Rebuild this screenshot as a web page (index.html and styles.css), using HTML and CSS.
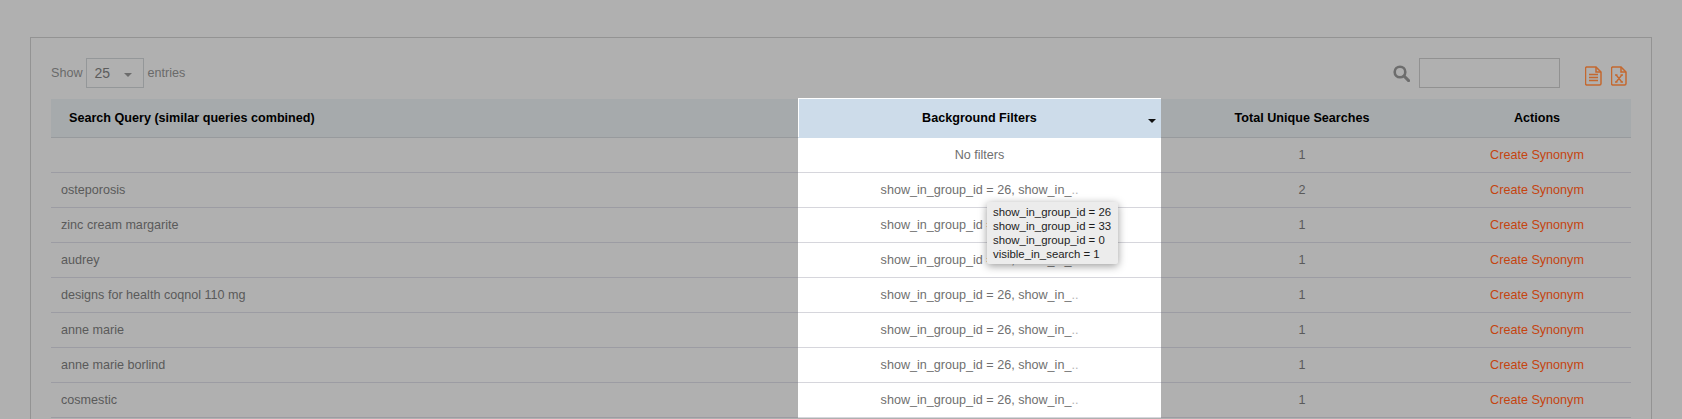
FILE: index.html
```html
<!DOCTYPE html>
<html lang="en">
<head>
<meta charset="utf-8">
<title>Search Queries</title>
<link rel="stylesheet" href="styles.css">
</head>
<body>
<div class="panel">
  <div class="toolbar">
    <div class="length">
      <span>Show</span>
      <div class="select"><span>25</span><i class="caret"></i></div>
      <span>entries</span>
    </div>
    <div class="tools">
      <svg class="search-icon" width="17" height="17" viewBox="0 0 17 17" aria-hidden="true">
        <circle cx="7" cy="7" r="5.3" fill="none" stroke="#6d6d6d" stroke-width="2.6"/>
        <path d="M11 11l4.6 4.6" stroke="#6d6d6d" stroke-width="3" stroke-linecap="round"/>
      </svg>
      <div class="search-box"></div>
      <div class="exports">
        <svg class="doc" width="17" height="20" viewBox="0 0 17 20" aria-hidden="true">
          <path d="M1.500 1h9.500l5 5v11.500a1.500 1.500 0 0 1-1.500 1.500h-13A1.500 1.500 0 0 1 .5 17.500V2.500A1.500 1.500 0 0 1 1.500 1z" fill="none" stroke="#c4682f" stroke-width="1.500"/>
          <path d="M11 1v5h5" fill="none" stroke="#c4682f" stroke-width="1.500"/>
          <path d="M4 8.500h9M4 11.500h9M4 14.500h9" stroke="#c4682f" stroke-width="1.500"/>
        </svg>
        <svg class="doc" width="16" height="20" viewBox="0 0 16 20" aria-hidden="true">
          <path d="M1.500 1h8.500l5 5v11.500a1.500 1.500 0 0 1-1.500 1.500h-12A1.500 1.500 0 0 1 .5 17.500V2.500A1.500 1.500 0 0 1 1.500 1z" fill="none" stroke="#c4682f" stroke-width="1.500"/>
          <path d="M10 1v5h5" fill="none" stroke="#c4682f" stroke-width="1.500"/>
          <path d="M4 9h2.500M9.500 9h2.500M4 16h2.500M9.500 16h2.500M5.200 9l5.600 7M10.800 9l-5.600 7" fill="none" stroke="#c4682f" stroke-width="1.300"/>
        </svg>
      </div>
    </div>
  </div>

  <div class="table-wrap">
    <table class="grid">
      <colgroup>
        <col class="c-query"><col class="c-filter"><col class="c-total"><col class="c-actions">
      </colgroup>
      <thead>
        <tr>
          <th class="query-head">Search Query (similar queries combined)</th>
          <th class="filter-head">Background Filters<i class="sort"></i></th>
          <th>Total Unique Searches</th>
          <th>Actions</th>
        </tr>
      </thead>
      <tbody>
        <tr><td class="q"></td><td class="f">No filters</td><td class="n">1</td><td class="a">Create Synonym</td></tr>
        <tr><td class="q">osteporosis</td><td class="f">show_in_group_id = 26, show_in_<span class="fade">..</span></td><td class="n">2</td><td class="a">Create Synonym</td></tr>
        <tr><td class="q">zinc cream margarite</td><td class="f">show_in_group_id = 26, show_in_<span class="fade">..</span></td><td class="n">1</td><td class="a">Create Synonym</td></tr>
        <tr><td class="q">audrey</td><td class="f">show_in_group_id = 26, show_in_<span class="fade">..</span></td><td class="n">1</td><td class="a">Create Synonym</td></tr>
        <tr><td class="q">designs for health coqnol 110 mg</td><td class="f">show_in_group_id = 26, show_in_<span class="fade">..</span></td><td class="n">1</td><td class="a">Create Synonym</td></tr>
        <tr><td class="q">anne marie</td><td class="f">show_in_group_id = 26, show_in_<span class="fade">..</span></td><td class="n">1</td><td class="a">Create Synonym</td></tr>
        <tr><td class="q">anne marie borlind</td><td class="f">show_in_group_id = 26, show_in_<span class="fade">..</span></td><td class="n">1</td><td class="a">Create Synonym</td></tr>
        <tr><td class="q">cosmestic</td><td class="f">show_in_group_id = 26, show_in_<span class="fade">..</span></td><td class="n">1</td><td class="a">Create Synonym</td></tr>
      </tbody>
    </table>
    <div class="tip">
      <div>show_in_group_id = 26</div>
      <div>show_in_group_id = 33</div>
      <div>show_in_group_id = 0</div>
      <div>visible_in_search = 1</div>
    </div>
  </div>
</div>
</body>
</html>
```
FILE: styles.css
```css
html, body {
  margin: 0;
  padding: 0;
  height: 419px;
  overflow: hidden;
  background: #b0b0b0;
  font-family: "Liberation Sans", Arial, sans-serif;
  font-size: 12.6px;
  color: #5e5e5e;
}

.panel {
  margin: 37px 30px 0;
  padding: 20px 20px 0;
  border: 1px solid #939393;
  height: 500px;
}

.toolbar {
  display: flex;
  justify-content: space-between;
  align-items: center;
  height: 30px;
  margin-bottom: 11px;
}

.length {
  display: flex;
  align-items: center;
  gap: 3px;
  color: #6a6a6a;
}

.select {
  box-sizing: border-box;
  width: 58px;
  height: 30px;
  margin-right: 1px;
  padding: 0 11px 0 8px;
  display: flex;
  align-items: center;
  justify-content: space-between;
  border: 1px solid #949799;
  font-size: 14px;
  color: #5c5c5c;
}

.caret {
  width: 0;
  height: 0;
  margin-top: 4px;
  border-left: 4px solid transparent;
  border-right: 4px solid transparent;
  border-top: 4px solid #6c6c6c;
}

.tools {
  display: flex;
  align-items: center;
  margin-right: -1px;
}

.search-icon {
  margin-right: 9px;
}

.search-box {
  box-sizing: border-box;
  width: 141px;
  height: 30px;
  border: 1px solid #919191;
}

.exports {
  display: flex;
  gap: 9px;
  margin-left: 25px;
  margin-right: 5px;
  padding-top: 5px;
}

.table-wrap {
  position: relative;
}

.grid {
  width: 1580px;
  table-layout: fixed;
  border-collapse: separate;
  border-spacing: 0;
}

.c-query { width: 747px; }
.c-filter { width: 363px; }
.c-total { width: 282px; }
.c-actions { width: 188px; }

.grid th {
  box-sizing: border-box;
  height: 39px;
  padding: 0;
  background: #a6aaac;
  border-bottom: 1px solid #979a9d;
  color: #000;
  font-weight: 700;
  text-align: center;
}

.grid th.query-head {
  padding-left: 18px;
  text-align: left;
}

.grid th.filter-head {
  position: relative;
  background: #cddcea;
  border-bottom-color: #cddcea;
  box-shadow: 0 -1px 0 #fff, inset 1px 0 0 #fff;
}

.sort {
  position: absolute;
  right: 5px;
  top: 20px;
  width: 0;
  height: 0;
  border-left: 4px solid transparent;
  border-right: 4px solid transparent;
  border-top: 4px solid #111;
}

.grid td {
  box-sizing: border-box;
  height: 35px;
  padding: 0 0 1px;
  border-bottom: 1px solid #9c9ca3;
  text-align: center;
  white-space: nowrap;
}

.grid td.q {
  padding-left: 10px;
  text-align: left;
  color: #5a5a5a;
}

.grid td.f {
  background: #fff;
  border-bottom-color: #d6d6dc;
  color: #6f6f6f;
}

.fade {
  color: #b5b5b5;
}

.grid td.n {
  color: #5a5a5a;
}

.grid td.a {
  color: #c5440f;
}

.tip {
  position: absolute;
  left: 936px;
  top: 103px;
  box-sizing: border-box;
  width: 131px;
  height: 62px;
  padding: 3px 6px;
  background: #ececec;
  border-radius: 2px;
  box-shadow: 0 2px 8px rgba(0, 0, 0, 0.4);
  color: #1c1c1c;
  font-size: 11.4px;
  line-height: 14px;
  white-space: nowrap;
}
```
